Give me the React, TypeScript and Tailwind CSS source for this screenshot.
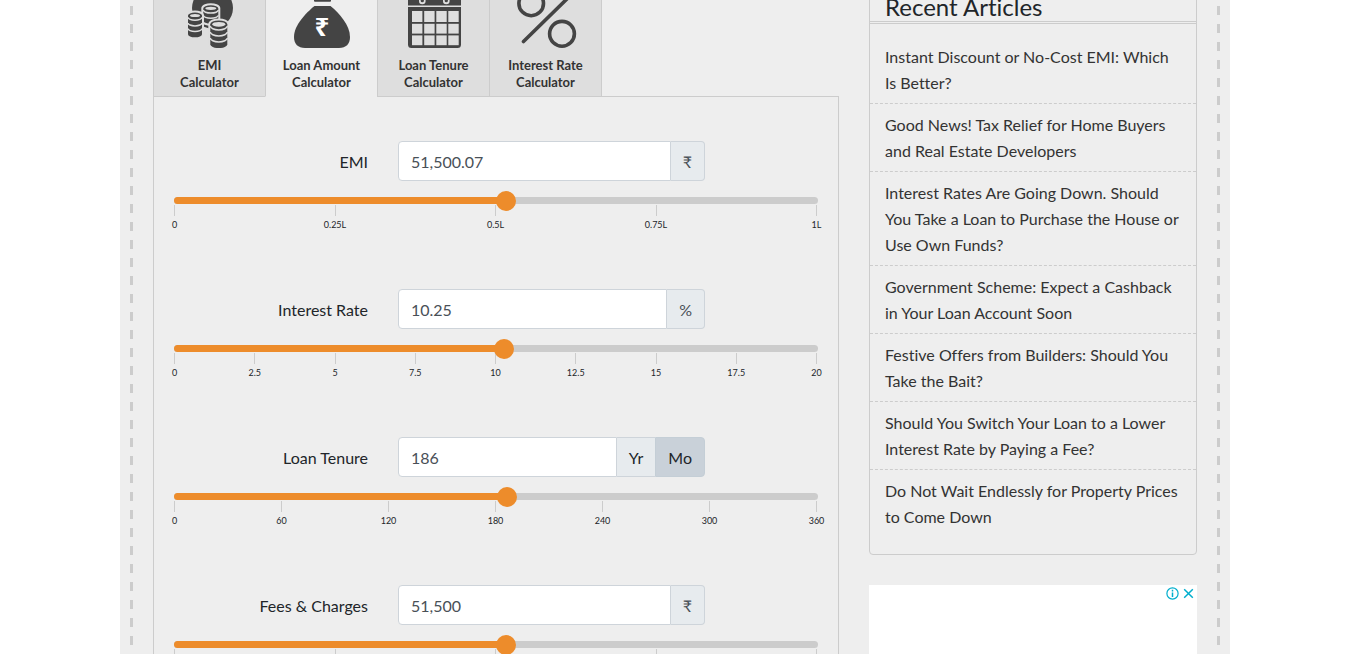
import { useState } from "react";
import type { ReactNode } from "react";

const INK = "#444444";
const TAB = "#dedede";

function CoinStack({ x, y, w, ry, coins, pitch }: { x: number; y: number; w: number; ry: number; coins: number; pitch: number }) {
  const rx = w / 2;
  const bottom = y + 2 + coins * pitch;
  const curve = (cy: number) => `M${x - rx} ${cy} A${rx} ${ry} 0 0 0 ${x + rx} ${cy}`;
  const body = `M${x - rx} ${y} A${rx} ${ry} 0 0 1 ${x + rx} ${y} V${bottom} A${rx} ${ry} 0 0 1 ${x - rx} ${bottom} Z`;
  return (
    <g>
      <path d={body} fill={INK} stroke={TAB} strokeWidth="4" />
      <path d={body} fill={INK} />
      <ellipse cx={x} cy={y} rx={rx - 2} ry={ry - 1.4} fill={TAB} />
      {Array.from({ length: coins }, (_, i) => (
        <path key={i} d={curve(y + 1.8 + i * pitch)} fill="none" stroke={TAB} strokeWidth="1.5" />
      ))}
    </g>
  );
}

function CoinsIcon() {
  return (
    <svg className="mx-auto block" width="59" height="60" viewBox="0 0 59 60" aria-hidden="true">
      <circle cx="32.5" cy="20" r="20.5" fill={INK} />
      <CoinStack x={30.8} y={20.3} w={15} ry={3} coins={2} pitch={5.2} />
      <CoinStack x={15} y={27.5} w={14} ry={3} coins={3} pitch={5.6} />
      <CoinStack x={38.8} y={36.3} w={17} ry={3.8} coins={3} pitch={6} />
    </svg>
  );
}

function MoneyBagIcon() {
  return (
    <svg className="mx-auto block" width="59" height="60" viewBox="0 0 59 60" aria-hidden="true">
      <path d="M19 0 H42 L38 9 H23 Z" fill={INK} />
      <rect x="22" y="9" width="17" height="4.8" rx="1" fill={INK} />
      <path
        d="M22.5 18 H38.5 C47 25 58 37 58 49 C58 56 54 60 47 60 H13 C6 60 2 56 2 49 C2 37 14 25 22.5 18 Z"
        fill={INK}
      />
      <text x="30" y="48" textAnchor="middle" fill="#fff" fontSize="26" fontWeight="700" fontFamily="'Noto Sans', sans-serif">
        ₹
      </text>
    </svg>
  );
}

function CalendarIcon() {
  return (
    <svg className="mx-auto block" width="59" height="60" viewBox="0 0 59 60" aria-hidden="true">
      <path d="M4 17.5 V8 a3 3 0 0 1 3 -3 H54 a3 3 0 0 1 3 3 V17.5 Z" fill={INK} />
      <path d="M4 19 H57 V56.5 a3.5 3.5 0 0 1 -3.5 3.5 H7.5 a3.5 3.5 0 0 1 -3.5 -3.5 Z" fill={INK} />
      {[18.3, 42.3].map((x) => (
        <g key={x}>
          <rect x={x - 3.3} y="-1" width="6.6" height="17.3" rx="3.3" fill={TAB} />
          <rect x={x - 1.6} y="0" width="3.2" height="14.3" rx="1.6" fill={INK} />
        </g>
      ))}
      {[23, 35.8, 47.4].map((y, r) =>
        [8, 20.2, 32.3, 44.3].map((x) => (
          <rect key={`${x}-${y}`} x={x} y={y} width="10.4" height={r === 0 ? 11 : 9.8} fill={TAB} />
        ))
      )}
    </svg>
  );
}

function PercentIcon() {
  return (
    <svg className="mx-auto block overflow-visible" width="59" height="60" viewBox="0 0 59 60" fill="none" stroke={INK} strokeWidth="3.6" strokeLinecap="round" aria-hidden="true">
      <circle cx="15.2" cy="15.4" r="12.3" />
      <circle cx="46" cy="45.8" r="12.4" />
      <path d="M7.5 53.5 L58 4" />
    </svg>
  );
}

const tabs: { top: string; icon: ReactNode; active?: boolean }[] = [
  { top: "EMI", icon: <CoinsIcon /> },
  { top: "Loan Amount", icon: <MoneyBagIcon />, active: true },
  { top: "Loan Tenure", icon: <CalendarIcon /> },
  { top: "Interest Rate", icon: <PercentIcon /> },
];

const articles = [
  "Instant Discount or No-Cost EMI: Which Is Better?",
  "Good News! Tax Relief for Home Buyers and Real Estate Developers",
  "Interest Rates Are Going Down. Should You Take a Loan to Purchase the House or Use Own Funds?",
  "Government Scheme: Expect a Cashback in Your Loan Account Soon",
  "Festive Offers from Builders: Should You Take the Bait?",
  "Should You Switch Your Loan to a Lower Interest Rate by Paying a Fee?",
  "Do Not Wait Endlessly for Property Prices to Come Down",
];

type FieldProps = {
  id: string;
  label: string;
  initial: number;
  max: number;
  step: number;
  ticks: string[];
  addon: ReactNode;
};

function SliderField({ id, label, initial, max, step, ticks, addon }: FieldProps) {
  const [value, setValue] = useState(initial);
  const [text, setText] = useState(initial.toLocaleString("en-US"));
  const fill = `${(value / max) * 100}%`;

  const onText = (next: string) => {
    setText(next);
    const parsed = Number(next.replace(/,/g, ""));
    if (!Number.isNaN(parsed)) setValue(Math.min(max, Math.max(0, parsed)));
  };
  const onSlide = (next: number) => {
    setValue(next);
    setText(next.toLocaleString("en-US"));
  };

  return (
    <div>
      <div className="grid grid-cols-[194px_307px] items-center gap-[30px]">
        <label htmlFor={id} className="pt-px text-right text-base text-[#212529]">
          {label}
        </label>
        <div className="flex h-10">
          <input
            id={id}
            type="text"
            value={text}
            onChange={(e) => onText(e.target.value)}
            className="min-w-0 flex-1 rounded-l border border-[#ced4da] bg-white px-3 pt-px text-base text-[#495057] outline-none"
          />
          {addon}
        </div>
      </div>
      <div className="relative mt-4 h-[7px] rounded bg-[#cccccc]">
        <div className="h-full rounded-l bg-[#ed8c2b]" style={{ width: fill }} />
        <input
          type="range"
          aria-label={`${label} slider`}
          min={0}
          max={max}
          step={step}
          value={value}
          onChange={(e) => onSlide(Number(e.target.value))}
          className="absolute -top-[6px] -left-[10px] h-5 w-[calc(100%+20px)] cursor-pointer appearance-none bg-transparent outline-none [&::-webkit-slider-thumb]:h-5 [&::-webkit-slider-thumb]:w-5 [&::-webkit-slider-thumb]:appearance-none [&::-webkit-slider-thumb]:rounded-full [&::-webkit-slider-thumb]:bg-[#ed8c2b]"
        />
      </div>
      <div className="mr-px flex justify-between pt-px">
        {ticks.map((t) => (
          <div key={t} className="flex w-px flex-col items-center">
            <span className="h-[11px] w-px bg-[#cccccc]" />
            <span className="text-[9px] leading-[18px] whitespace-nowrap text-[#212529]">{t}</span>
          </div>
        ))}
      </div>
    </div>
  );
}

function Addon({ children }: { children: ReactNode }) {
  return (
    <span className="flex items-center rounded-r border border-l-0 border-[#ced4da] bg-[#e7ebee] px-3 pt-px text-base text-[#495057]">
      {children}
    </span>
  );
}

function TenureUnits() {
  const [unit, setUnit] = useState("Mo");
  return (
    <div className="flex text-base text-[#212529]" role="group" aria-label="Tenure unit">
      {["Yr", "Mo"].map((u) => (
        <button
          key={u}
          type="button"
          aria-pressed={unit === u}
          onClick={() => setUnit(u)}
          className={`cursor-pointer px-3 pt-px last:rounded-r ${
            unit === u ? "border border-[#c4ced6] bg-[#c9d1d9]" : "border-y border-[#ced4da] bg-[#e7ebee]"
          }`}
        >
          {u}
        </button>
      ))}
    </div>
  );
}

function DashedRule() {
  return (
    <div
      aria-hidden="true"
      className="w-[3px] shrink-0 bg-[repeating-linear-gradient(to_bottom,#eeeeee_0px,#eeeeee_8px,#cccccc_8px,#cccccc_17px,#eeeeee_17px,#eeeeee_18px)]"
    />
  );
}

export default function App() {
  return (
    <div className="h-screen overflow-hidden bg-white pr-4 font-['Lato',sans-serif] [font-variant-ligatures:none]">
      <div className="mx-auto -mt-5 flex max-w-[1110px] bg-[#eeeeee] px-[10px]">
        <DashedRule />
        <div className="flex min-w-0 flex-1 items-start gap-[30px] px-5">
          <main className="min-w-0 flex-1">
            <nav className="relative z-10 -mb-px flex" aria-label="Calculators">
              {tabs.map((tab) => (
                <a
                  key={tab.top}
                  href="#calculator"
                  aria-current={tab.active ? "page" : undefined}
                  className={`w-28 border-b border-l border-l-[#cccccc] pt-2 pb-[5px] text-center text-[13px] leading-[17px] font-bold text-[#333333] last:w-[113px] last:border-r last:border-r-[#cccccc] ${
                    tab.active ? "border-b-[#eeeeee] bg-[#eeeeee]" : "border-b-[#cccccc] bg-[#dedede]"
                  }`}
                >
                  {tab.icon}
                  <span className="mt-[9px] block">
                    {tab.top}
                    <br />
                    Calculator
                  </span>
                </a>
              ))}
            </nav>
            <form id="calculator" className="flex flex-col gap-[55px] border border-[#cccccc] px-5 py-11">
              <SliderField id="emi" label="EMI" initial={51500.07} max={100000} step={0.01} ticks={["0", "0.25L", "0.5L", "0.75L", "1L"]} addon={<Addon>₹</Addon>} />
              <SliderField
                id="rate"
                label="Interest Rate"
                initial={10.25}
                max={20}
                step={0.25}
                ticks={["0", "2.5", "5", "7.5", "10", "12.5", "15", "17.5", "20"]}
                addon={<Addon>%</Addon>}
              />
              <SliderField id="tenure" label="Loan Tenure" initial={186} max={360} step={1} ticks={["0", "60", "120", "180", "240", "300", "360"]} addon={<TenureUnits />} />
              <SliderField id="fees" label="Fees & Charges" initial={51500} max={100000} step={100} ticks={["0", "25K", "50K", "75K", "1L"]} addon={<Addon>₹</Addon>} />
            </form>
          </main>

          <aside className="w-[328px] shrink-0">
            <section className="rounded border border-[#cccccc] pb-[17px]">
              <h2 className="border-b-3 border-double border-[#cccccc] px-[15px] pt-[11px] text-2xl leading-[29px] text-[#212529]">Recent Articles</h2>
              <ul className="pt-3">
                {articles.map((title) => (
                  <li key={title} className="border-b border-dashed border-[#cccccc] px-[15px] pt-2 pb-[7px] text-base leading-[26px] last:border-b-0">
                    <a href="#article" className="text-[#333333]">
                      {title}
                    </a>
                  </li>
                ))}
              </ul>
            </section>
            <div className="mt-[30px] flex h-64 items-start justify-end gap-1 bg-white px-[3px] pt-[2px]">
              <button type="button" aria-label="About this ad" className="cursor-pointer">
                <svg className="block" width="13" height="13" viewBox="0 0 13 13" fill="none" aria-hidden="true">
                  <circle cx="6.5" cy="6.5" r="5.6" stroke="#00aecd" strokeWidth="1.2" />
                  <path d="M6.5 5.4 V10 M6.5 2.8 V4.4" stroke="#00aecd" strokeWidth="1.5" />
                </svg>
              </button>
              <button type="button" aria-label="Close ad" className="cursor-pointer">
                <svg className="block" width="11" height="13" viewBox="0 0 11 13" fill="none" aria-hidden="true">
                  <path d="M1.2 2.2 L9.8 10.8 M9.8 2.2 L1.2 10.8" stroke="#00aecd" strokeWidth="1.5" />
                </svg>
              </button>
            </div>
          </aside>
        </div>
        <DashedRule />
      </div>
    </div>
  );
}
